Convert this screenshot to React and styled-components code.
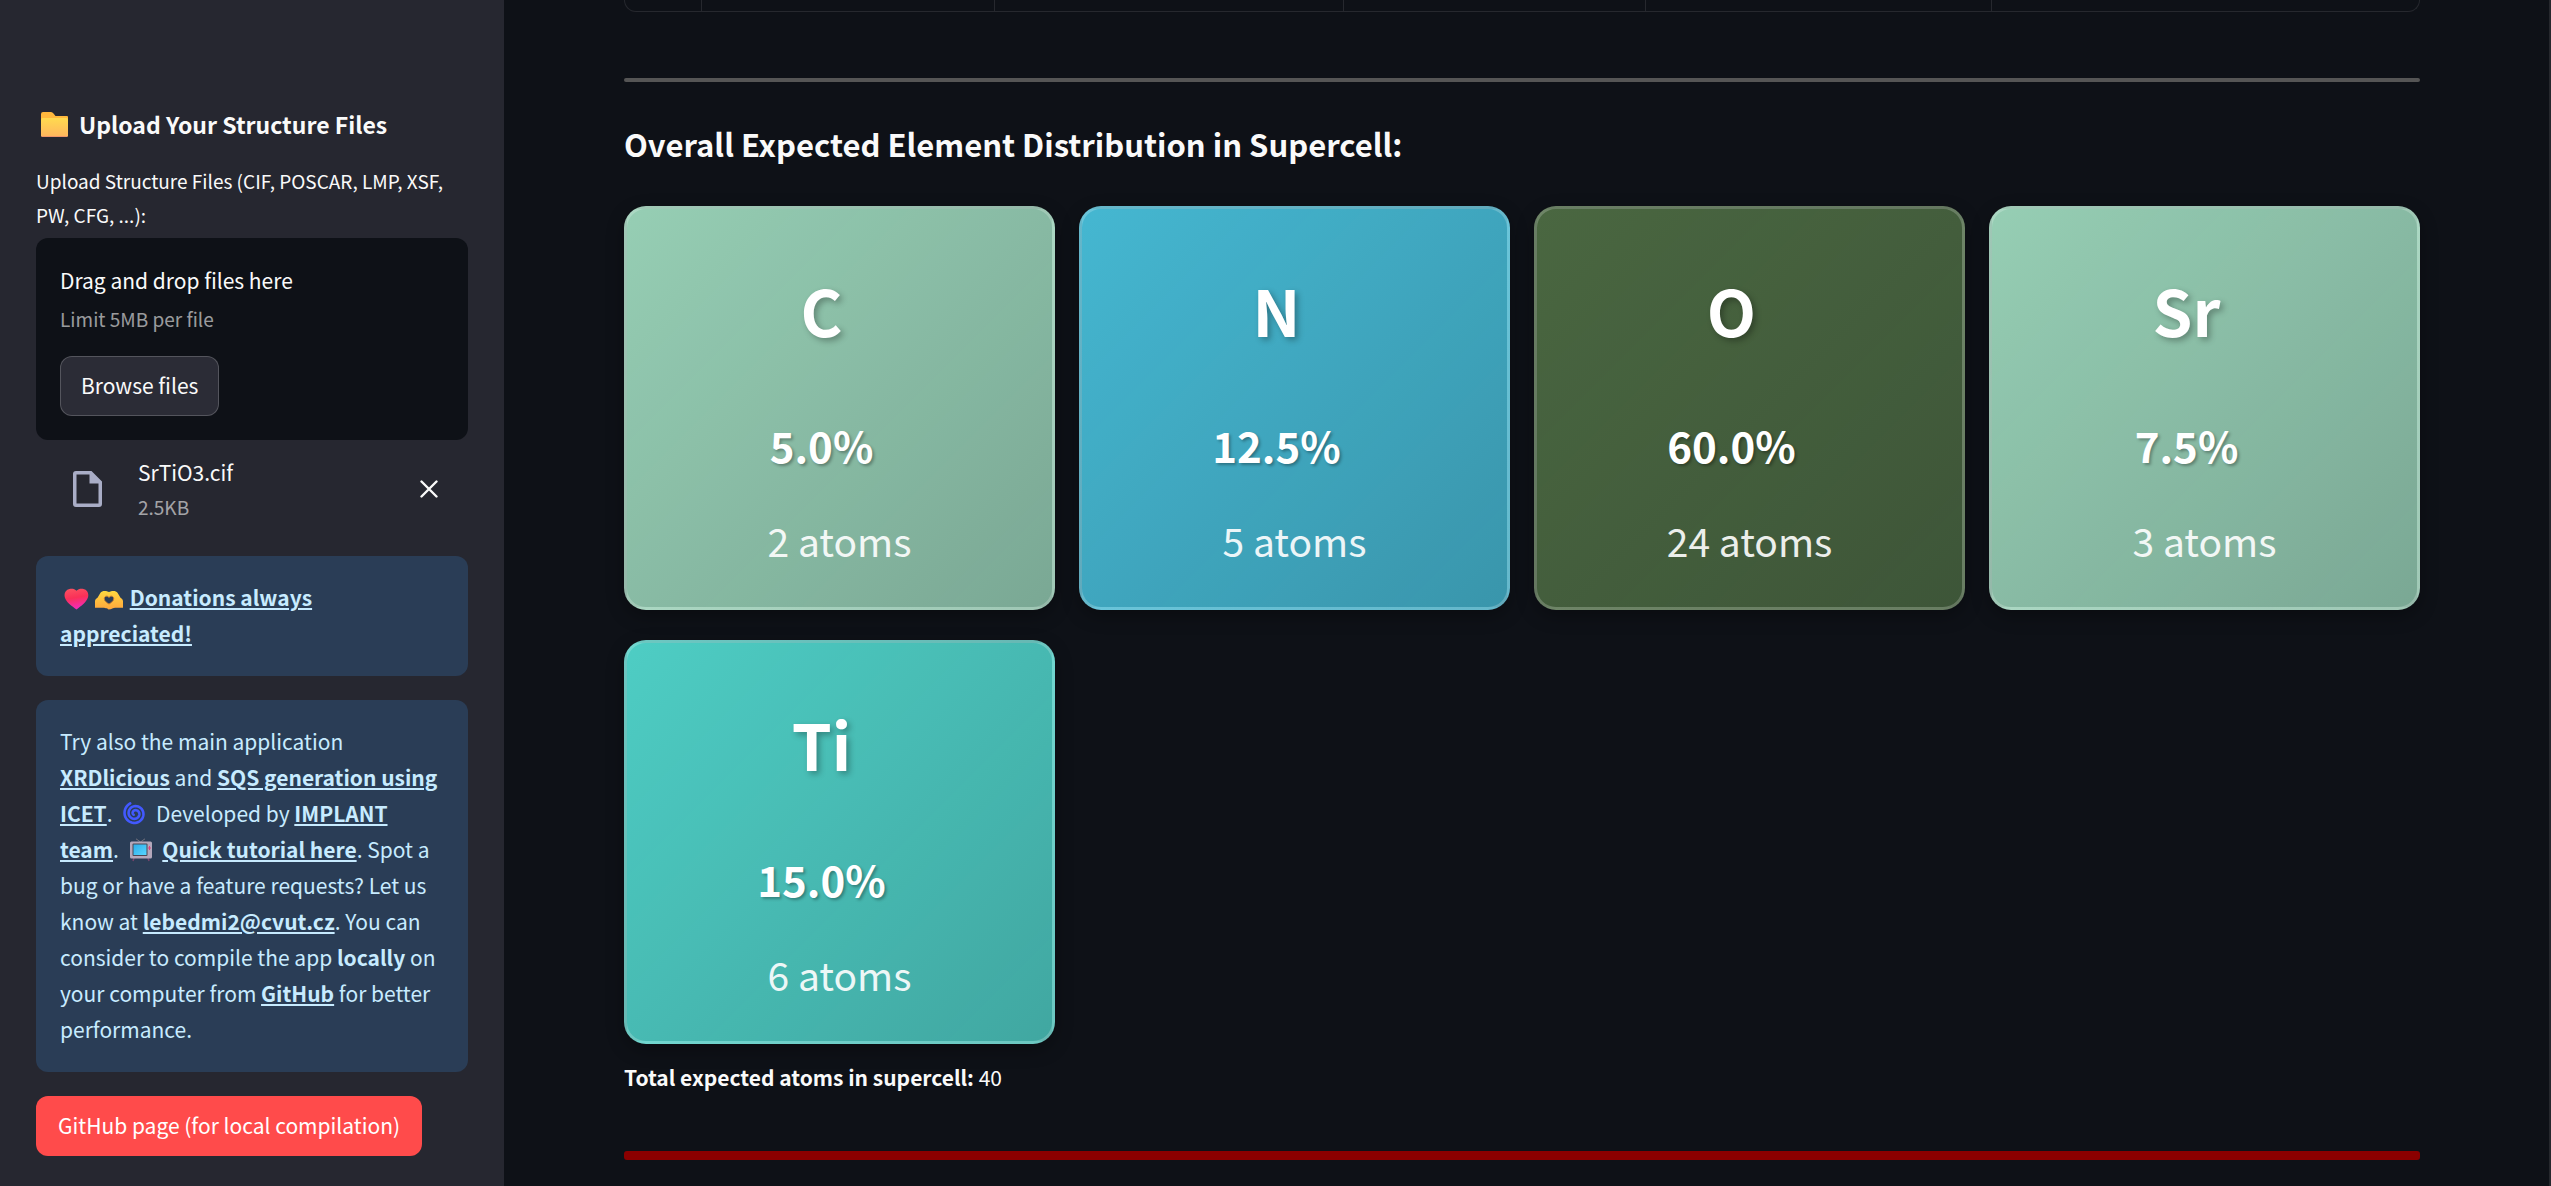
import React from "react";
import styled, { createGlobalStyle } from "styled-components";

const GlobalStyle = createGlobalStyle`
  * { box-sizing: border-box; }
  html { background: #0e1117; }
  body {
    margin: 0;
    color: #fafafa;
    font-family: "Noto Sans CJK SC", "Noto Sans", sans-serif;
    font-size: 21px;
    line-height: 36px;
  }
  button { font-family: inherit; }
`;

const Page = styled.div`
  display: flex;
  min-height: 100vh;
  max-height: 100vh;
  overflow: hidden;
  border-right: 2px solid #26282d;
`;

const Sidebar = styled.aside`
  flex: none;
  width: 504px;
  padding: 98px 36px 30px;
  background: #262730;
`;

const SidebarTitle = styled.h2`
  display: flex;
  align-items: center;
  gap: 10px;
  margin: 0 0 14px;
  padding-left: 4px;
  font-size: 23px;
  line-height: 52px;
  font-weight: 600;
`;

const FieldLabel = styled.label`
  display: block;
  margin-bottom: 6px;
  font-size: 19px;
  line-height: 34px;
`;

const Dropzone = styled.section`
  padding: 24px;
  border-radius: 12px;
  background: #0e1117;
`;

const Muted = styled.div`
  color: rgba(250, 250, 250, 0.6);
  font-size: 19px;
  line-height: 34px;
`;

const Hint = styled(Muted)`
  margin-top: 4px;
`;

const BrowseButton = styled.button`
  display: block;
  height: 60px;
  margin-top: 20px;
  padding: 0 20px 2px;
  border: 1px solid rgba(250, 250, 250, 0.2);
  border-radius: 12px;
  background: #2b2c36;
  color: inherit;
  font-size: 21px;
`;

const FileRow = styled.div`
  display: flex;
  align-items: center;
  margin-bottom: 32px;
  padding: 14px 30px 0 28px;
`;

const FileInfo = styled.div`
  flex: 1;
  margin-left: 26px;
`;

const IconButton = styled.button`
  display: flex;
  padding: 0;
  border: 0;
  background: none;
  color: #fafafa;
`;

const Notice = styled.div`
  margin-bottom: 24px;
  padding: 23px 24px 25px;
  border-radius: 12px;
  background: #2a3d56;
  color: #c7ebff;

  a {
    color: inherit;
    font-weight: 600;
    text-decoration: underline;
  }
  svg { margin: 0 2px 0 4px; vertical-align: -4px; }
`;

const PrimaryLink = styled.a`
  display: inline-flex;
  align-items: center;
  height: 60px;
  padding: 0 22px 2px;
  border-radius: 12px;
  background: #ff4b4b;
  color: #fff;
  text-decoration: none;
`;

const Main = styled.main`
  flex: 1;
  min-width: 0;
  padding: 0 129px 0 120px;
`;

const TableEnd = styled.div`
  display: grid;
  grid-template-columns: 77fr 293fr 350fr 302fr 347fr 427fr;
  height: 12px;
  border: 1px solid #26282e;
  border-top: 0;
  border-radius: 0 0 12px 12px;
`;

const TableCell = styled.div`
  border-right: 1px solid #26282e;
  &:last-child { border-right: 0; }
`;

const Rule = styled.hr`
  height: ${(p) => p.$size}px;
  margin: ${(p) => p.$space}px 0 0;
  border: 0;
  border-radius: 3px;
  background: ${(p) => p.$color};
`;

const SectionTitle = styled.h3`
  margin: 36px 0;
  font-size: 31px;
  line-height: 52px;
  font-weight: 600;
`;

const CardGrid = styled.div`
  display: grid;
  grid-template-columns: repeat(4, 1fr);
  gap: 30px 24px;
`;

const Card = styled.article`
  height: 404px;
  padding: 54px 27px 0;
  border: 3px solid rgba(255, 255, 255, 0.2);
  border-radius: 22px;
  background: linear-gradient(135deg, ${(p) => p.$color}, ${(p) => p.$color}cc);
  box-shadow: 0 6px 18px rgba(0, 0, 0, 0.3);
  text-align: center;
`;

const Symbol = styled.h2`
  margin: 0;
  padding-right: 36px;
  color: #fff;
  font-size: 64px;
  line-height: 92px;
  font-weight: 700;
  text-shadow: 3px 3px 6px rgba(0, 0, 0, 0.3);
`;

const Percent = styled.h3`
  margin: 50px 0 0;
  padding-right: 36px;
  color: #fff;
  font-size: 42px;
  line-height: 80px;
  font-weight: 600;
  text-shadow: 2px 2px 3px rgba(0, 0, 0, 0.3);
`;

const Atoms = styled.p`
  margin: 15px 0 0;
  color: #fff;
  font-size: 39px;
  line-height: 80px;
  opacity: 0.9;
`;

const Total = styled.p`
  margin: 15px 0 0;
`;

const FolderEmoji = () => (
  <svg width="29" height="29" viewBox="0 0 29 29" aria-hidden="true">
    <defs>
      <linearGradient id="folder" x1="0" y1="0" x2="0" y2="1">
        <stop offset="0" stopColor="#ffda4f" />
        <stop offset="1" stopColor="#ffb65e" />
      </linearGradient>
    </defs>
    <path d="M1 4Q1 2 3 2H11Q12.500 2 13.500 3.500L15.500 6H27Q28 6 28 7V10H1Z" fill="#ffb83d" />
    <rect x="1" y="8" width="27" height="19" rx="1.500" fill="url(#folder)" />
    <path d="M2 26.500H27" stroke="#ef9668" strokeWidth="1" />
  </svg>
);

const HeartEmoji = () => (
  <svg width="25" height="22" viewBox="0 0 25 24" preserveAspectRatio="none" aria-hidden="true">
    <defs>
      <linearGradient id="heart" x1="0" y1="0" x2="0.200" y2="1">
        <stop offset="0" stopColor="#fb5361" />
        <stop offset="0.500" stopColor="#fa3058" />
        <stop offset="1" stopColor="#f32bb8" />
      </linearGradient>
    </defs>
    <path d="M12.500 3C14 1 17 .4 19.500 1C23.500 1.800 25 6 24 10C22.500 15.500 17 19.500 12.500 23.500C8 19.500 2 15.500 .8 10C-.2 6 1.500 1.800 5.500 1C8 .4 11 1 12.500 3Z" fill="url(#heart)" />
  </svg>
);

const HandsEmoji = () => (
  <svg width="28" height="20" viewBox="0 0 28 22" preserveAspectRatio="none" aria-hidden="true">
    <defs>
      <linearGradient id="hands" x1="0" y1="0" x2="0" y2="1">
        <stop offset="0" stopColor="#ffd83f" />
        <stop offset="1" stopColor="#ffa63d" />
      </linearGradient>
    </defs>
    <path fillRule="evenodd" d="M0 19.500V12.500C0 10.500 1 9.500 2.500 8.500L5.500 3C6.500 1.200 9 .8 11 1.200L14 2.200L17 1.200C19 .8 21.500 1.200 22.500 3L25.500 8.500C27 9.500 28 10.500 28 12.500V19.500H20C18.500 19.500 17.500 20.500 15.500 21.300L13.500 21.500L12 20C10.500 20 9.500 19.500 8 19.500ZM14 8.200C12.500 5.800 9.300 6.500 9.300 9.500C9.300 12.300 11.800 13.800 14 15.500C16.200 13.800 18.700 12.300 18.700 9.500C18.700 6.500 15.500 5.800 14 8.200Z" fill="url(#hands)" />
    <path d="M14 8.200C12.500 5.800 9.300 6.500 9.300 9.500C9.300 12.300 11.800 13.800 14 15.500C16.200 13.800 18.700 12.300 18.700 9.500C18.700 6.500 15.500 5.800 14 8.200Z" fill="none" stroke="#c77b32" strokeWidth="1" />
  </svg>
);

// Arms wind inwards counter-clockwise from the upper left.
const spiralPoints = Array.from({ length: 81 }, (_, i) => {
  const t = i / 80;
  const angle = -Math.PI * 0.64 - t * Math.PI * 4.6;
  const radius = 11.2 - 9.4 * t;
  return `${(13 + radius * Math.cos(angle)).toFixed(2)},${(12.5 + radius * Math.sin(angle)).toFixed(2)}`;
}).join(" ");

const CycloneEmoji = () => (
  <svg width="28" height="25" viewBox="-1 0 28 25" aria-hidden="true">
    <polyline points={spiralPoints} fill="none" stroke="#4259ff" strokeWidth="2.600" strokeLinecap="round" />
  </svg>
);

const TvEmoji = () => (
  <svg width="28" height="24" viewBox="-2 0 28 24" aria-hidden="true">
    <defs>
      <linearGradient id="screen" x1="0" y1="0" x2="1" y2="1">
        <stop offset="0" stopColor="#2daeea" />
        <stop offset="1" stopColor="#58d6ff" />
      </linearGradient>
    </defs>
    <path d="M6 .8L10.500 4L15 .8" fill="none" stroke="#75727d" strokeWidth="1" />
    <path d="M4 20L3 23M18 20L19 23" stroke="#76446c" strokeWidth="1.500" />
    <rect x="0" y="3.500" width="22" height="17" rx="1.500" fill="#b4a8bb" />
    <rect x="2.500" y="5.500" width="15" height="12.500" rx="1" fill="#4b4653" />
    <rect x="3.500" y="6.500" width="13" height="10.500" fill="url(#screen)" />
    <path d="M19.500 8V12M18 10H21" stroke="#d7447e" strokeWidth="1" />
  </svg>
);

const FileIcon = () => (
  <svg width="48" height="48" viewBox="0 0 48 48" aria-hidden="true">
    <path fillRule="evenodd" d="M12 6H27.500L38 16.500V39Q38 42 35 42H12Q9 42 9 39V9Q9 6 12 6ZM12.500 9.500V38.500H34.500V18.500H25.500V9.500Z" fill="#a9adc6" />
  </svg>
);

const CloseIcon = () => (
  <svg width="18" height="18" viewBox="0 0 18 18" aria-hidden="true">
    <path d="M1.500 1.500L16.500 16.500M16.500 1.500L1.500 16.500" stroke="currentColor" strokeWidth="2.400" strokeLinecap="round" />
  </svg>
);

const elements = [
  { symbol: "C", percent: "5.0%", atoms: 2, color: "#96ceb4" },
  { symbol: "N", percent: "12.5%", atoms: 5, color: "#45b7d1" },
  { symbol: "O", percent: "60.0%", atoms: 24, color: "#4a6741" },
  { symbol: "Sr", percent: "7.5%", atoms: 3, color: "#96ceb4" },
  { symbol: "Ti", percent: "15.0%", atoms: 6, color: "#4ecdc4" },
];

export default function App() {
  return (
    <Page>
      <GlobalStyle />
      <Sidebar>
        <SidebarTitle>
          <FolderEmoji />
          Upload Your Structure Files
        </SidebarTitle>
        <FieldLabel htmlFor="browse">
          Upload Structure Files (CIF, POSCAR, LMP, XSF, PW, CFG, ...):
        </FieldLabel>
        <Dropzone>
          <div>Drag and drop files here</div>
          <Hint>Limit 5MB per file</Hint>
          <BrowseButton id="browse" type="button">Browse files</BrowseButton>
        </Dropzone>
        <FileRow>
          <FileIcon />
          <FileInfo>
            <div>SrTiO3.cif</div>
            <Muted>2.5KB</Muted>
          </FileInfo>
          <IconButton type="button" aria-label="Remove SrTiO3.cif">
            <CloseIcon />
          </IconButton>
        </FileRow>
        <Notice>
          <HeartEmoji />
          <HandsEmoji /> <a href="#donate">Donations always appreciated!</a>
        </Notice>
        <Notice>
          Try also the main application <a href="#xrd">XRDlicious</a> and{" "}
          <a href="#sqs">SQS generation using ICET</a>. <CycloneEmoji /> Developed by{" "}
          <a href="#team">IMPLANT team</a>. <TvEmoji /> <a href="#tutorial">Quick tutorial here</a>.
          Spot a bug or have a feature requests? Let us know at{" "}
          <a href="mailto:lebedmi2@cvut.cz">lebedmi2@cvut.cz</a>. You can consider to compile the
          app <strong>locally</strong> on your computer from <a href="#github">GitHub</a> for
          better performance.
        </Notice>
        <PrimaryLink href="#github">GitHub page (for local compilation)</PrimaryLink>
      </Sidebar>
      <Main>
        <TableEnd>
          <TableCell />
          <TableCell />
          <TableCell />
          <TableCell />
          <TableCell />
          <TableCell />
        </TableEnd>
        <Rule $size={4} $space={66} $color="#555555" />
        <SectionTitle>Overall Expected Element Distribution in Supercell:</SectionTitle>
        <CardGrid>
          {elements.map((e) => (
            <Card key={e.symbol} $color={e.color}>
              <Symbol>{e.symbol}</Symbol>
              <Percent>{e.percent}</Percent>
              <Atoms>{e.atoms} atoms</Atoms>
            </Card>
          ))}
        </CardGrid>
        <Total>
          <strong>Total expected atoms in supercell:</strong> 40
        </Total>
        <Rule $size={9} $space={56} $color="#8b0000" />
      </Main>
    </Page>
  );
}
